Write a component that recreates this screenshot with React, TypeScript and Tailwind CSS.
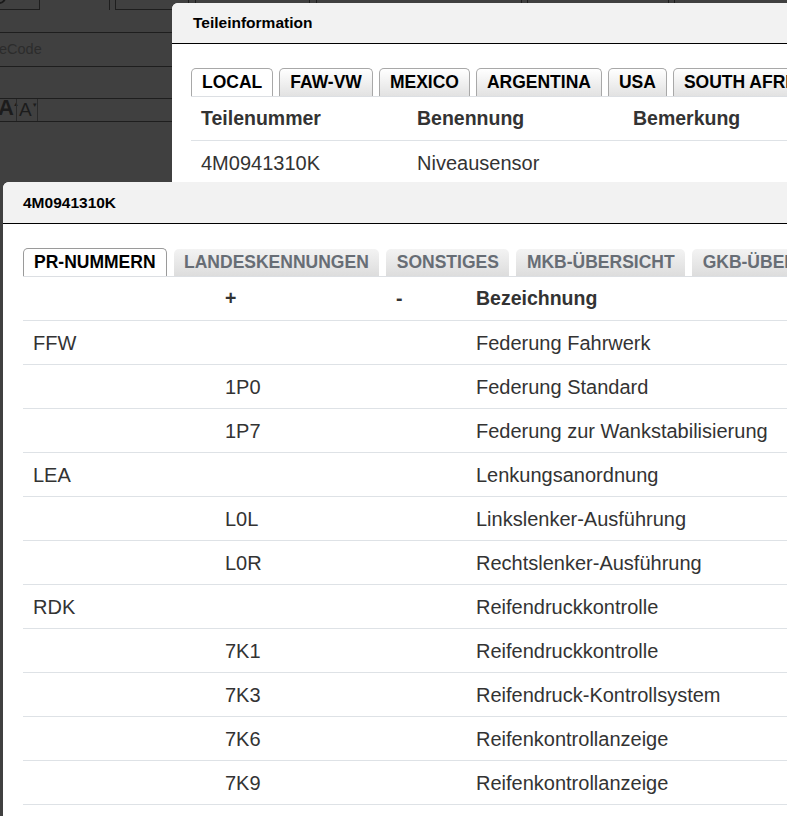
import React from "react";

type Tab = { label: string; active?: boolean };

const partTabs: Tab[] = [
  { label: "LOCAL", active: true },
  { label: "FAW-VW" },
  { label: "MEXICO" },
  { label: "ARGENTINA" },
  { label: "USA" },
  { label: "SOUTH AFRICA" },
  { label: "BRAZIL" },
];

const prTabs: Tab[] = [
  { label: "PR-NUMMERN", active: true },
  { label: "LANDESKENNUNGEN" },
  { label: "SONSTIGES" },
  { label: "MKB-ÜBERSICHT" },
  { label: "GKB-ÜBERSICHT" },
];

type PrRow = { family: string; plus: string; minus: string; text: string };

const prRows: PrRow[] = [
  { family: "FFW", plus: "", minus: "", text: "Federung Fahrwerk" },
  { family: "", plus: "1P0", minus: "", text: "Federung Standard" },
  { family: "", plus: "1P7", minus: "", text: "Federung zur Wankstabilisierung" },
  { family: "LEA", plus: "", minus: "", text: "Lenkungsanordnung" },
  { family: "", plus: "L0L", minus: "", text: "Linkslenker-Ausführung" },
  { family: "", plus: "L0R", minus: "", text: "Rechtslenker-Ausführung" },
  { family: "RDK", plus: "", minus: "", text: "Reifendruckkontrolle" },
  { family: "", plus: "7K1", minus: "", text: "Reifendruckkontrolle" },
  { family: "", plus: "7K3", minus: "", text: "Reifendruck-Kontrollsystem" },
  { family: "", plus: "7K6", minus: "", text: "Reifenkontrollanzeige" },
  { family: "", plus: "7K9", minus: "", text: "Reifenkontrollanzeige" },
  { family: "", plus: "", minus: "", text: "" },
];

function LightTabs({ tabs }: { tabs: Tab[] }) {
  return (
    <div className="flex items-end gap-[6px] whitespace-nowrap border-b border-[#dcdfe3]">
      {tabs.map((t) =>
        t.active ? (
          <div
            key={t.label}
            className="flex h-[28px] items-center rounded-t-[5px] border border-b-0 border-[#a8a8a8] bg-white px-[10px] text-[17.5px] font-bold text-black"
          >
            {t.label}
          </div>
        ) : (
          <div
            key={t.label}
            className="flex h-[28px] items-center rounded-t-[5px] border border-b-0 border-[#a8a8a8] bg-gradient-to-b from-white to-[#e2e2e2] px-[10px] text-[17.5px] font-bold text-black"
          >
            {t.label}
          </div>
        )
      )}
    </div>
  );
}

function FlatTabs({ tabs }: { tabs: Tab[] }) {
  return (
    <div className="flex items-end gap-[7px] whitespace-nowrap border-b border-[#dcdfe3]">
      {tabs.map((t) =>
        t.active ? (
          <div
            key={t.label}
            className="flex h-[28px] items-center rounded-t-[5px] border border-b-0 border-[#9a9a9a] bg-white px-[10px] text-[17.5px] font-bold text-black"
          >
            {t.label}
          </div>
        ) : (
          <div
            key={t.label}
            className="flex h-[27px] items-center rounded-t-[5px] bg-gradient-to-b from-[#f3f3f3] to-[#dddddd] px-[10.5px] text-[17.5px] font-bold text-[#676d75]"
          >
            {t.label}
          </div>
        )
      )}
    </div>
  );
}

function DimmedPage() {
  return (
    <div className="flex flex-col text-[#1c1c1c]">
      {/* toolbar strip */}
      <div className="flex h-[10px]">
        <div className="relative h-[10px] w-[42px] overflow-hidden border-b border-r border-[#1e1e1e]">
          <div className="-ml-[7px] -mt-[9px] h-[13px] w-[13px] rounded-full border-2 border-[#1a1a1a]" />
        </div>
        <div className="h-[10px] w-[75px] border-r border-[#1e1e1e]" />
        <div className="ml-[5px] h-[10px] w-[78px] border-b border-l border-r border-[#1e1e1e]" />
        <div className="ml-[6px] h-[10px] w-[122px] border-b border-l border-r border-[#1e1e1e]" />
        <div className="ml-[6px] h-[10px] w-[218px] border-b border-l border-r border-[#1e1e1e]" />
        <div className="ml-[5px] h-[10px] w-[150px] border-b border-l border-r border-[#1e1e1e]" />
        <div className="ml-[5px] h-[10px] w-[120px] border-b border-l border-[#1e1e1e]" />
      </div>
      <div className="h-[23px] border-b border-[#1e1e1e]" />
      <div className="flex h-[34px] items-center border-b border-[#1e1e1e]">
        <span className="-ml-[1px] text-[14.5px] text-[#2c2c2c]">eCode</span>
      </div>
      <div className="h-[32px] border-b border-[#1e1e1e]" />
      {/* font size switcher */}
      <div className="flex h-[23px] items-stretch border-b border-[#1e1e1e]">
        <div className="flex w-[16px] items-end pb-[2px]">
          <span className="-ml-[2px] text-[22px] font-bold leading-none text-[#1c1c1c]">A</span>
          <span className="-ml-[1px] mb-[12px] text-[6px] leading-none text-[#1c1c1c]">▲</span>
        </div>
        <div className="flex w-[22px] items-end border-l border-r border-[#2a2a2a] pb-[2px] pl-[2px]">
          <span className="text-[19px] leading-none text-[#1c1c1c]">A</span>
          <span className="mb-[11px] text-[6px] leading-none text-[#1c1c1c]">▼</span>
        </div>
      </div>
    </div>
  );
}

export default function App() {
  return (
    <div className="relative h-[816px] w-[787px] overflow-hidden bg-[#404040] font-['Liberation_Sans',Arial,sans-serif]">
      <DimmedPage />

      {/* Teileinformation dialog */}
      <div className="absolute left-[172px] top-[3px] h-[300px] w-[720px] overflow-hidden rounded-tl-[6px] bg-white">
        <div className="flex h-[41px] items-center border-b border-black bg-[#f2f2f2] pl-[21px] text-[15.5px] font-bold text-black">
          Teileinformation
        </div>
        <div className="pl-[19px] pt-[24px]">
          <LightTabs tabs={partTabs} />
          <div className="flex h-[44px] items-center border-b border-[#dee2e6] text-[19.5px] font-bold text-[#333]">
            <div className="w-[216px] pl-[10px]">Teilenummer</div>
            <div className="w-[216px] pl-[10px]">Benennung</div>
            <div className="w-[216px] pl-[10px]">Bemerkung</div>
          </div>
          <div className="flex h-[44px] items-center border-b border-[#dee2e6] text-[20px] text-[#333]">
            <div className="w-[216px] pl-[10px]">4M0941310K</div>
            <div className="w-[216px] pl-[10px]">Niveausensor</div>
            <div className="w-[216px] pl-[10px]"></div>
          </div>
        </div>
      </div>

      {/* PR-Nummern dialog */}
      <div className="absolute left-[3px] top-[182px] h-[700px] w-[900px] overflow-hidden rounded-tl-[6px] bg-white">
        <div className="flex h-[42px] items-center border-b border-black bg-[#f2f2f2] pl-[20px] text-[15.5px] font-bold text-black">
          4M0941310K
        </div>
        <div className="pl-[20px] pt-[24px]">
          <FlatTabs tabs={prTabs} />
          <div className="flex h-[44px] items-center border-b border-[#dee2e6] text-[19.5px] font-bold text-[#333]">
            <div className="w-[192px] pl-[10px]"></div>
            <div className="w-[171px] pl-[10px]">+</div>
            <div className="w-[80px] pl-[10px]">-</div>
            <div className="flex-1 pl-[10px]">Bezeichnung</div>
          </div>
          {prRows.map((r, i) => (
            <div
              key={i}
              className="flex h-[44px] items-center border-b border-[#dee2e6] text-[20px] text-[#333]"
            >
              <div className="w-[192px] pl-[10px]">{r.family}</div>
              <div className="w-[171px] pl-[10px]">{r.plus}</div>
              <div className="w-[80px] pl-[10px]">{r.minus}</div>
              <div className="flex-1 pl-[10px]">{r.text}</div>
            </div>
          ))}
        </div>
      </div>
    </div>
  );
}
